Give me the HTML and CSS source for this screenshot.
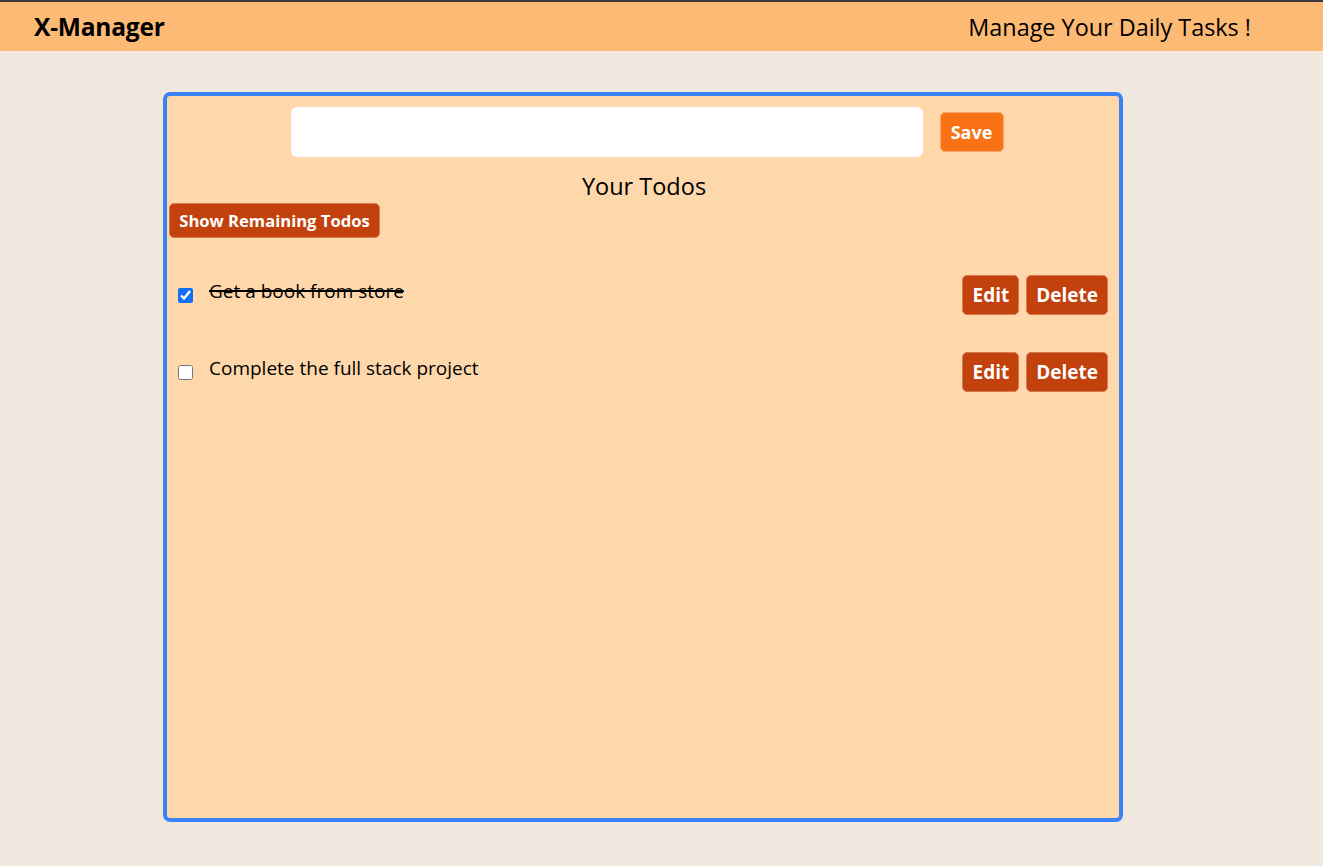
FILE: index.html
```html
<!DOCTYPE html>
<html lang="en">
<head>
<meta charset="utf-8">
<title>X-Manager</title>
<link rel="stylesheet" href="styles.css">
</head>
<body>
<nav class="nav">
  <div class="brand">X-Manager</div>
  <div class="tagline">Manage Your Daily Tasks !</div>
</nav>
<main class="panel">
  <div class="add-row">
    <input class="todo-input" type="text">
    <button class="btn-save">Save</button>
  </div>
  <h2 class="title">Your Todos</h2>
  <button class="btn-toggle">Show Remaining Todos</button>
  <div class="todos">
    <div class="todo">
      <div class="todo-left">
        <input type="checkbox" class="check" checked>
        <span class="todo-text done">Get a book from store</span>
      </div>
      <div class="todo-actions">
        <button class="btn-act">Edit</button>
        <button class="btn-act">Delete</button>
      </div>
    </div>
    <div class="todo">
      <div class="todo-left">
        <input type="checkbox" class="check">
        <span class="todo-text">Complete the full stack project</span>
      </div>
      <div class="todo-actions">
        <button class="btn-act">Edit</button>
        <button class="btn-act">Delete</button>
      </div>
    </div>
  </div>
</main>
</body>
</html>
```
FILE: styles.css
```css
* { box-sizing: border-box; }
html, body { margin: 0; padding: 0; }
body {
  background: #f0e8df;
  font-family: "Open Sans", "Noto Sans", sans-serif;
  color: #000;
  min-height: 866px;
}
.nav {
  height: 51px;
  border-top: 2px solid #3c3c3c;
  background: #fdba74;
  display: flex;
  align-items: center;
  justify-content: space-between;
  padding: 0 72px 0 34px;
}
.brand { font-size: 24.5px; font-weight: 700; letter-spacing: -0.2px; }
.tagline { font-size: 23.4px; font-weight: 400; }
.panel {
  width: 960px;
  height: 730px;
  margin: 41px 0 0 163px;
  background: #fed7aa;
  border: 4px solid #3b82f6;
  border-radius: 7px;
  padding: 11px 0 0 2px;
}
.add-row {
  display: flex;
  justify-content: center;
  align-items: center;
  gap: 17px;
  padding-left: 6px;
}
.todo-input {
  width: 632px;
  height: 50px;
  border: none;
  border-radius: 6px;
  background: #fff;
  outline: none;
}
.btn-save {
  height: 40px;
  width: 64px;
  background: #f97316;
  color: #fff;
  font-family: inherit;
  font-weight: 700;
  font-size: 18px;
  border: 1px solid #f8a36a;
  border-radius: 5px;
  padding: 0;
}
.title {
  margin: 12px 0 0;
  text-align: center;
  font-size: 23.5px;
  font-weight: 500;
  line-height: 34px;
}
.btn-toggle {
  display: block;
  margin: 0;
  height: 35px;
  width: 211px;
  padding: 0;
  background: #c2410c;
  color: #fff;
  font-family: inherit;
  font-weight: 700;
  font-size: 16.6px;
  border: 1px solid #d97a50;
  border-radius: 5px;
}
.todos { padding: 37px 11px 0 9px; display: flex; flex-direction: column; gap: 37px; }
.todo {
  display: flex;
  justify-content: space-between;
  align-items: center;
  height: 40px;
}
.todo-left { display: flex; align-items: center; gap: 16px; }
.check { width: 15px; height: 15px; margin: 0; accent-color: #0f6ff5; }
.todo-text { font-size: 19px; padding-bottom: 9px; }
.todo-text.done { text-decoration: line-through; text-decoration-thickness: 2px; }
.todo-actions { display: flex; gap: 7px; }
.btn-act {
  height: 40px;
  padding: 0 9px;
  background: #c2410c;
  color: #fff;
  font-family: inherit;
  font-weight: 700;
  font-size: 19px;
  border: 1px solid #d97a50;
  border-radius: 5px;
}
```
